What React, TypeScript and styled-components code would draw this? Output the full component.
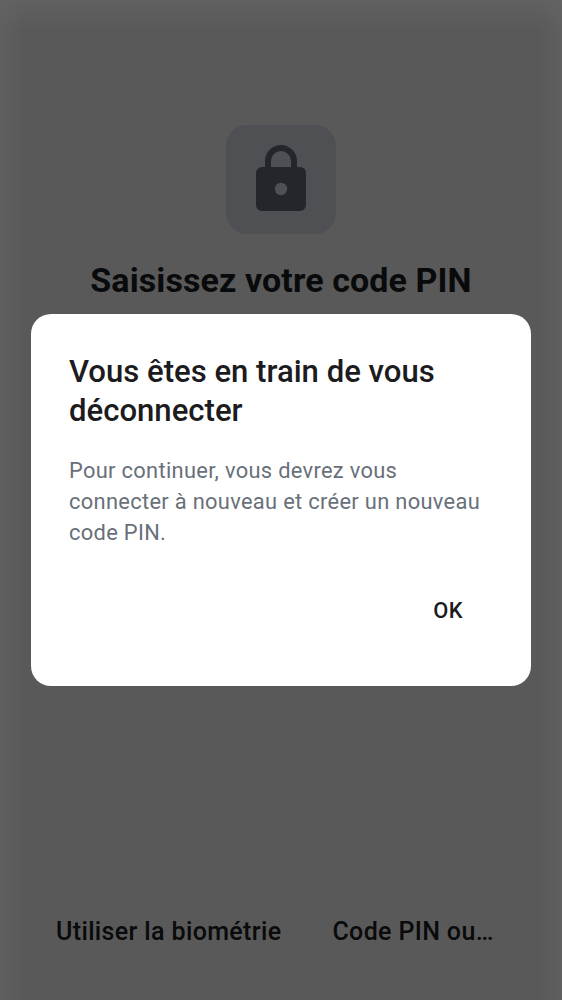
import React from "react";
import styled, { createGlobalStyle } from "styled-components";

const GlobalStyle = createGlobalStyle`
  * { box-sizing: border-box; }
  body { margin: 0; font-family: Roboto, sans-serif; background: #585858; }
  h1, h2, p { margin: 0; }
  button { border: 0; padding: 0; background: none; font: inherit; color: inherit; }
`;

const Screen = styled.main`
  position: relative;
  display: flex;
  flex-direction: column;
  align-items: center;
  width: 562px;
  height: 1000px;
  padding: 125px 56px 52px;
  overflow: hidden;
  background:
    linear-gradient(to bottom, rgba(104, 104, 104, 0.5), rgba(104, 104, 104, 0) 30px),
    linear-gradient(to right, rgba(104, 104, 104, 0.4), rgba(104, 104, 104, 0) 24px),
    linear-gradient(to left, rgba(104, 104, 104, 0.4), rgba(104, 104, 104, 0) 24px),
    #595959;
  color: #090a0b;
`;

const LockTile = styled.div`
  display: flex;
  justify-content: center;
  width: 110px;
  height: 109px;
  padding-top: 20px;
  border-radius: 21px;
  background: #4f5054;
`;

const Title = styled.h1`
  margin-top: 26px;
  font-size: 34px;
  line-height: 40px;
  font-weight: 700;
  letter-spacing: 0.1px;
  white-space: nowrap;
`;

const Actions = styled.footer`
  display: flex;
  gap: 51px;
  width: 100%;
  margin-top: auto;
`;

const TextAction = styled.button`
  font-size: 25px;
  line-height: 32px;
  font-weight: 500;
  letter-spacing: 0.36px;
  white-space: nowrap;
`;

const Overlay = styled.div`
  position: absolute;
  inset: 0;
  display: flex;
  align-items: center;
  justify-content: center;
`;

const Dialog = styled.section`
  display: flex;
  flex-direction: column;
  width: 500px;
  height: 372px;
  padding: 38px 38px 0;
  border-radius: 20px;
  background: #fff;
`;

const DialogTitle = styled.h2`
  font-size: 31.1px;
  line-height: 39px;
  font-weight: 500;
  color: #1b1b20;
`;

const Message = styled.p`
  margin-top: 25px;
  font-size: 21.875px;
  line-height: 31px;
  letter-spacing: 0.31px;
  color: #68707a;
`;

const Confirm = styled.button`
  align-self: flex-end;
  margin: 48px 30px 0 0;
  font-size: 21.875px;
  line-height: 30px;
  font-weight: 500;
  letter-spacing: 0.5px;
  color: #1b1b20;
`;

export default function App() {
  return (
    <>
      <GlobalStyle />
      <Screen>
        <LockTile>
          <svg width="50" height="66" viewBox="0 0 50 66" aria-hidden="true">
            <path d="M12 26V16a13 13 0 0 1 26 0V26" fill="none" stroke="#23272b" strokeWidth="6" />
            <path fillRule="evenodd" fill="#23272b" d="M6 22h38a6 6 0 0 1 6 6v32a6 6 0 0 1-6 6H6a6 6 0 0 1-6-6V28a6 6 0 0 1 6-6Zm19 15.800a6.200 6.200 0 1 0 0 12.400a6.200 6.200 0 0 0 0-12.400Z" />
          </svg>
        </LockTile>
        <Title>Saisissez votre code PIN</Title>
        <Actions>
          <TextAction>Utiliser la biométrie</TextAction>
          <TextAction>Code PIN ou…</TextAction>
        </Actions>
        <Overlay>
          <Dialog role="dialog" aria-modal="true">
            <DialogTitle>Vous êtes en train de vous<br />déconnecter</DialogTitle>
            <Message>Pour continuer, vous devrez vous<br />connecter à nouveau et créer un nouveau<br />code PIN.</Message>
            <Confirm>OK</Confirm>
          </Dialog>
        </Overlay>
      </Screen>
    </>
  );
}
